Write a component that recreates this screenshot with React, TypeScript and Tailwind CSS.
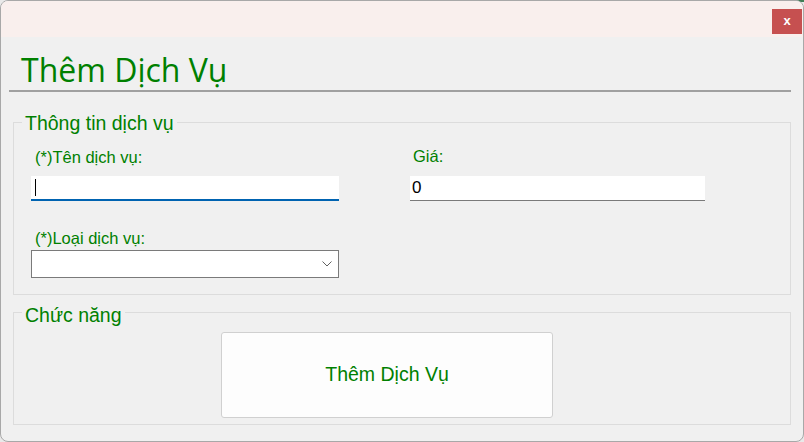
import React from "react";

export default function App() {
  const arial = { fontFamily: '"Liberation Sans", Arial, sans-serif' };
  return (
    <div className="w-[804px] h-[442px] bg-[#e9e9e9] relative overflow-hidden">
      <div className="absolute left-[477px] top-0 w-[327px] h-[2px] bg-[#3f7d55]" />
      <div
        className="absolute inset-0 rounded-[8px] border border-[#a8a8a8] bg-[#f0f0f0] overflow-hidden flex flex-col"
        style={arial}
      >
        {/* title bar */}
        <div className="h-[36px] bg-[#f9efed] flex justify-end items-start pt-[8px] pr-[1px] shrink-0">
          <div className="w-[30px] h-[25px] bg-[#c65050] text-white text-[13px] font-bold flex items-center justify-center leading-none pb-[2px]">
            x
          </div>
        </div>
        {/* heading */}
        <div className="px-[8px] shrink-0">
          <div
            className="text-[#008000] text-[32px] leading-none pt-[17px] pl-[12px] h-[53px]"
            style={{ fontFamily: '"Open Sans", sans-serif', fontWeight: 400 }}
          >
            Thêm Dịch Vụ
          </div>
          <div className="h-[2px] bg-[#a0a0a0] mr-[4px]" />
        </div>

        {/* group 1 */}
        <div className="px-[12px] pt-[21px]">
          <fieldset className="border border-[#dcdcdc] h-[182px] px-[17px] pb-0 m-0 relative">
            <legend className="text-[#008000] text-[19.5px] leading-none px-[3px] ml-[-9px] mt-[3px] relative top-[1px]">
              Thông tin dịch vụ
            </legend>
            <div className="flex">
              <div className="w-[308px]">
                <div className="text-[#008000] text-[16.5px] leading-none pl-[4px] pt-[16px]">
                  (*)Tên dịch vụ:
                </div>
                <div className="mt-[11px] h-[25px] bg-white border-b-2 border-[#0063b1] flex items-center pl-[4px]">
                  <div className="w-[1px] h-[17px] bg-black" />
                </div>
                <div className="text-[#008000] text-[16.5px] leading-none pl-[4px] mt-[29px]">
                  (*)Loại dịch vụ:
                </div>
                <div className="mt-[3px] h-[28px] bg-white border border-[#7a7a7a] flex items-center justify-end pr-[6px]">
                  <svg width="10" height="6" viewBox="0 0 10 6">
                    <path d="M0.5 0.5 L5 5 L9.5 0.5" fill="none" stroke="#606060" strokeWidth="1" />
                  </svg>
                </div>
              </div>
              <div className="ml-[71px] w-[295px]">
                <div className="text-[#008000] text-[16.5px] leading-none pl-[3px] pt-[15px]">Giá:</div>
                <div className="mt-[12px] h-[25px] bg-white border-b border-[#7a7a7a] flex items-center pl-[2px] text-[17px] text-black">
                  0
                </div>
              </div>
            </div>
          </fieldset>
        </div>

        {/* group 2 */}
        <div className="px-[12px] pt-[8px]">
          <fieldset className="border border-[#dcdcdc] h-[122px] m-0 p-0 relative">
            <legend className="text-[#008000] text-[19.5px] leading-none px-[3px] ml-[8px] mt-[3px] relative top-[3px]">
              Chức năng
            </legend>
            <div className="flex justify-start pl-[207px] pt-[9px]">
              <div className="w-[332px] h-[86px] bg-[#fdfdfd] border border-[#d0d0d0] rounded-[3px] flex items-center justify-center text-[#008000] text-[19.5px]">
                Thêm Dịch Vụ
              </div>
            </div>
          </fieldset>
        </div>
      </div>
    </div>
  );
}
